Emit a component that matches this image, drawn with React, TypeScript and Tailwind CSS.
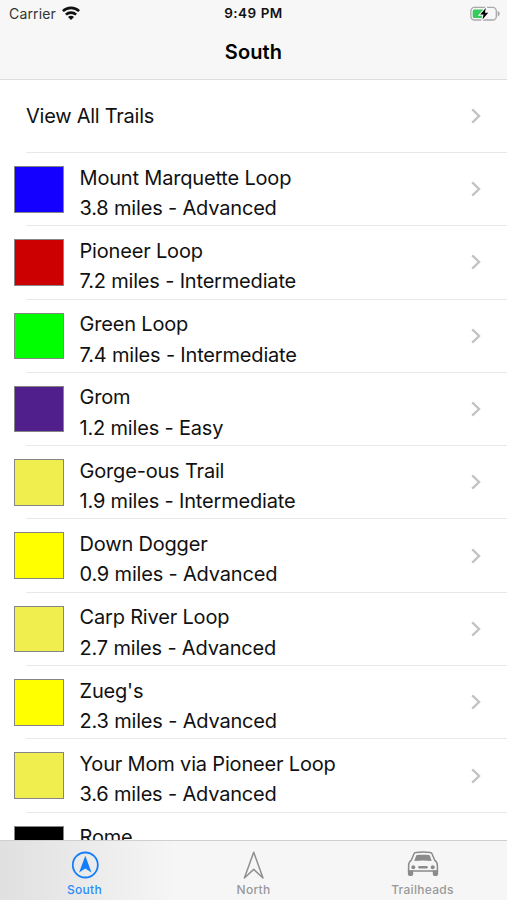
interface Trail {
  name: string;
  miles?: string;
  difficulty?: string;
  color: string;
}

const trails: Trail[] = [
  { name: 'Mount Marquette Loop', miles: '3.8', difficulty: 'Advanced', color: 'bg-[#1400ff]' },
  { name: 'Pioneer Loop', miles: '7.2', difficulty: 'Intermediate', color: 'bg-[#cc0000]' },
  { name: 'Green Loop', miles: '7.4', difficulty: 'Intermediate', color: 'bg-[#00ff00]' },
  { name: 'Grom', miles: '1.2', difficulty: 'Easy', color: 'bg-[#511f8c]' },
  { name: 'Gorge-ous Trail', miles: '1.9', difficulty: 'Intermediate', color: 'bg-[#f0ee4e]' },
  { name: 'Down Dogger', miles: '0.9', difficulty: 'Advanced', color: 'bg-[#ffff00]' },
  { name: 'Carp River Loop', miles: '2.7', difficulty: 'Advanced', color: 'bg-[#f0ee4e]' },
  { name: "Zueg's", miles: '2.3', difficulty: 'Advanced', color: 'bg-[#ffff00]' },
  { name: 'Your Mom via Pioneer Loop', miles: '3.6', difficulty: 'Advanced', color: 'bg-[#f0ee4e]' },
  { name: 'Rome', color: 'bg-black' },
];

const WifiIcon = () => (
  <svg className="ml-[6px] h-[15px] w-[18px]" viewBox="0 0 18 15" fill="none" stroke="#111" strokeWidth="2.6">
    <path d="M.9 5.2c4.400-4.400 11.800-4.400 16.200 0" />
    <path d="M3.900 8.700c2.800-2.800 7.400-2.800 10.200 0" />
    <path d="M9 14.100 6 11.100c1.700-1.700 4.300-1.700 6 0z" fill="#111" stroke="none" />
  </svg>
);

const BatteryIcon = () => (
  <svg className="h-[16px] w-[32px]" viewBox="0 0 32 16" fill="none">
    <rect x="1.9" y="1.4" width="25.4" height="12.600" rx="3.600" stroke="#a9a9ab" strokeWidth="1.300" />
    <path d="M28.600 5c2.800.8 2.800 4.600 0 5.400z" fill="#a9a9ab" />
    <path d="M5.200 3.400h9v8.700h-9a1.500 1.500 0 0 1-1.500-1.500V4.900a1.500 1.500 0 0 1 1.500-1.500z" fill="#35cc5b" />
    <path
      d="M16.800 2.100 11.200 8.600h3.300l-1 4.800 5.700-6.600h-3.300z"
      fill="#000"
      stroke="#f7f7f7"
      strokeWidth="2.200"
      paintOrder="stroke"
    />
  </svg>
);

const Chevron = () => (
  <svg className="mb-px h-[16px] w-[10px]" viewBox="0 0 10 16" fill="none" stroke="#c2c2c4" strokeWidth="2.3">
    <path d="M1.2 1.3 8.1 8l-6.9 6.7" />
  </svg>
);

const SouthIcon = () => (
  <svg className="h-[28px] w-[28px]" viewBox="0 0 28 28" fill="none">
    <circle cx="14.300" cy="14" r="12.500" stroke="#147efb" strokeWidth="1.800" />
    <path d="M14.300 4.800 20.500 21.500l-6.200-3.900-6.200 3.900z" fill="#147efb" />
  </svg>
);

const NorthIcon = () => (
  <svg className="h-[28px] w-[28px]" viewBox="0 0 28 28" fill="none" stroke="#8f8f8f" strokeWidth="1.5" strokeLinejoin="round">
    <path d="M13.700 1.300 23 27l-9.300-8.600L4.400 27z" />
  </svg>
);

const CarIcon = () => (
  <svg className="h-[28px] w-[32px]" viewBox="0 0 32 28" fill="none">
    <path
      d="M6.900 3c.4-.9 1-1.300 1.900-1.400 4.700-.7 9.700-.7 14.400 0 .9.100 1.500.5 1.900 1.400l2.600 6.200c1.900 1.400 2.700 3.100 2.700 5.500v5.300H1.600v-5.300c0-2.400.8-4.100 2.700-5.500z"
      stroke="#8b8b8b"
      strokeWidth="1.500"
    />
    <path d="M9 5c.2-.6.500-.9 1.100-1 4-.5 7.800-.5 11.800 0 .6.100.9.400 1.100 1l1.700 5c-5.900-.8-11.500-.8-17.400 0z" fill="#8b8b8b" />
    <path d="M.9 19.500h5.300v3.700A1.700 1.700 0 0 1 4.500 24.900H2.600A1.700 1.700 0 0 1 .9 23.200zM25.800 19.500h5.300v3.700a1.700 1.700 0 0 1-1.700 1.700h-1.900a1.700 1.700 0 0 1-1.700-1.700z" fill="#8b8b8b" />
    <circle cx="6.300" cy="16.200" r="2" fill="#8b8b8b" />
    <circle cx="25.700" cy="16.200" r="2" fill="#8b8b8b" />
    <rect x="11.200" y="14.900" width="9.600" height="2.600" rx="1.200" fill="#8b8b8b" />
  </svg>
);

const TrailRow = ({ trail }: { trail: Trail }) => (
  <li className="flex h-[73.3px] pl-[14px]">
    <div className={`mt-[13px] h-[46.5px] w-[49.5px] shrink-0 border border-[#858585] ${trail.color}`} />
    <div className="ml-[16px] flex-1 pt-[9.5px] text-[20px] leading-[30.4px] tracking-[-0.18px]">
      <p>{trail.name}</p>
      {trail.miles && (
        <p>
          {trail.miles} miles - {trail.difficulty}
        </p>
      )}
    </div>
    <div className="flex items-center pr-[26px]">
      <Chevron />
    </div>
  </li>
);

const Divider = () => <div className="-mt-px ml-[26px] h-px bg-[#e8e8e9]" />;

export default function App() {
  return (
    <div className="flex h-[900px] w-[507px] flex-col overflow-hidden bg-white font-['Inter',sans-serif] text-[#111]">
      <header className="h-[80px] shrink-0 border-b border-[#dedede] bg-[#f7f7f7]">
        <div className="grid h-[27px] grid-cols-3 items-center">
          <div className="flex items-center pl-[9px] text-[14px] tracking-[0.15px] text-[#333]">
            Carrier
            <WifiIcon />
          </div>
          <div className="text-center text-[13.5px] font-semibold tracking-[0.5px]">9:49 PM</div>
          <div className="flex justify-end pr-[6px]">
            <BatteryIcon />
          </div>
        </div>
        <h1 className="pt-[10px] text-center text-[20px] leading-[30px] font-semibold tracking-[0.1px] text-black">South</h1>
      </header>

      <main className="h-[760px] shrink-0 overflow-hidden">
        <div className="flex h-[73px] items-center justify-between pr-[26px] pb-px pl-[26px] text-[20px] tracking-[-0.25px]">
          View All Trails
          <Chevron />
        </div>
        <Divider />
        <ul>
          {trails.map((trail) => (
            <div key={trail.name}>
              <TrailRow trail={trail} />
              <Divider />
            </div>
          ))}
        </ul>
      </main>

      <nav className="z-10 grid h-[60px] shrink-0 grid-cols-3 border-t border-[#cfcfcf] bg-[#f6f6f6] bg-linear-to-r from-[#e0e0e0] to-[#f6f6f6] to-35% text-[12px] leading-[18px] font-medium tracking-[0.3px] text-[#999]">
        <div className="flex flex-col items-center gap-[2px] pt-[10px] text-[#2b8bfb]">
          <SouthIcon />
          <span>South</span>
        </div>
        <div className="flex flex-col items-center gap-[2px] pt-[10px]">
          <NorthIcon />
          <span>North</span>
        </div>
        <div className="flex flex-col items-center gap-[2px] pt-[10px]">
          <CarIcon />
          <span>Trailheads</span>
        </div>
      </nav>
    </div>
  );
}
